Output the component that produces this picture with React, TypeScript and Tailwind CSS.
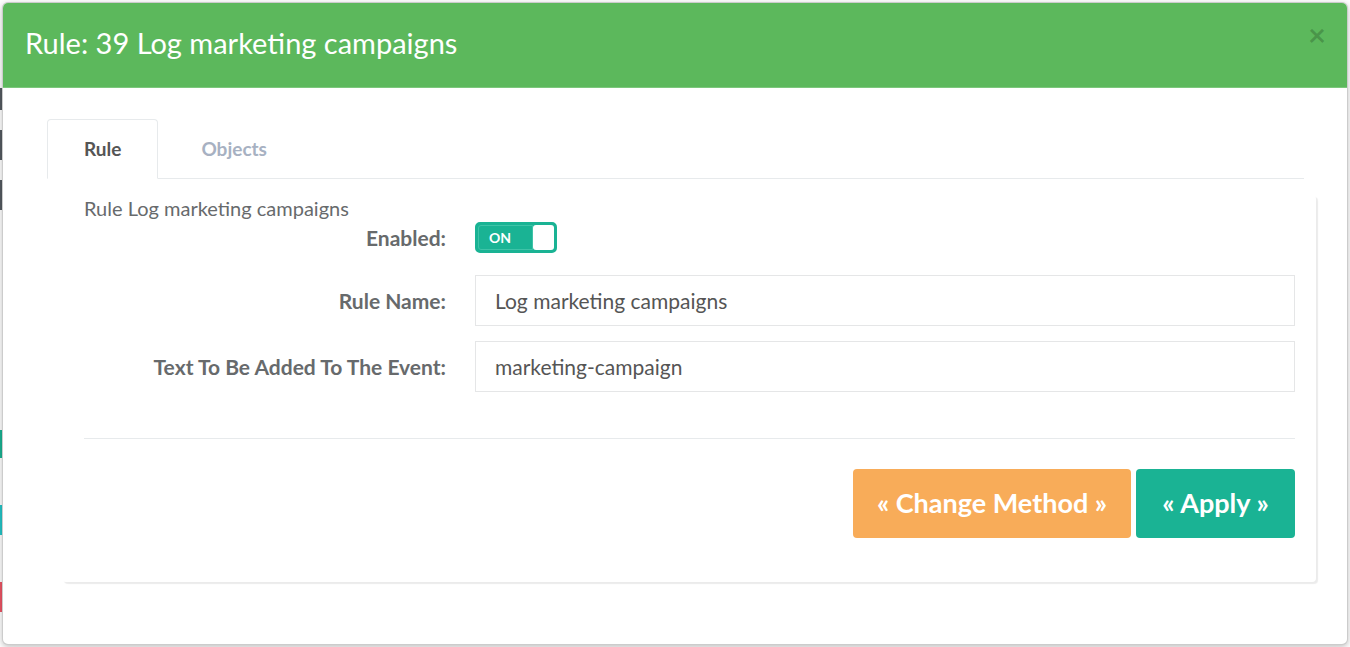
import React from "react";

// strips of the page that peek out from behind the dialog on the left edge
const backdropRows: { h: string; color: string }[] = [
  { h: "h-[88px]", color: "bg-transparent" },
  { h: "h-[22px]", color: "bg-[#555b61]" },
  { h: "h-[20px]", color: "bg-transparent" },
  { h: "h-[30px]", color: "bg-[#555b61]" },
  { h: "h-[20px]", color: "bg-transparent" },
  { h: "h-[30px]", color: "bg-[#555b61]" },
  { h: "h-[220px]", color: "bg-transparent" },
  { h: "h-[28px]", color: "bg-[#1ab394]" },
  { h: "h-[47px]", color: "bg-transparent" },
  { h: "h-[30px]", color: "bg-[#23c6c8]" },
  { h: "h-[47px]", color: "bg-transparent" },
  { h: "h-[30px]", color: "bg-[#ed5565]" },
];

const Backdrop: React.FC = () => (
  <div className="flex h-full flex-col">
    {backdropRows.map((r, i) => (
      <div key={i} className={`${r.h} w-[3px] ${r.color}`} />
    ))}
  </div>
);

const Toggle: React.FC = () => (
  <div className="flex h-[31px] w-[82px] rounded-[5px] border-2 border-[#1ab394] bg-[#1ab394] p-[1px]">
    <div className="flex flex-1 items-center rounded-l-[3px] border border-[#3fc3a8] pl-[10px] text-[14px] font-bold leading-none text-white">
      ON
    </div>
    <div className="w-[21px] rounded-[3px] bg-white" />
  </div>
);

const FormRow: React.FC<{ label: string; children: React.ReactNode; className?: string }> = ({
  label,
  children,
  className = "",
}) => (
  <div className={`flex items-center gap-[29px] ${className}`}>
    <label className="w-[362px] shrink-0 text-right text-[21px] font-bold text-[#676a6c]">{label}</label>
    <div className="flex-1">{children}</div>
  </div>
);

const TextInput: React.FC<{ value: string }> = ({ value }) => (
  <input
    type="text"
    defaultValue={value}
    className="h-[51px] w-full border border-[#e5e6e7] bg-white px-[19px] text-[21px] text-[#555] outline-none"
  />
);

export default function App() {
  return (
    <div className="relative h-[647px] w-full overflow-hidden bg-white font-['Lato',sans-serif]">
      <Backdrop />

      <div className="absolute inset-[2px] flex flex-col overflow-hidden rounded-[6px] border border-black/20 bg-white shadow-[0_2px_6px_rgba(0,0,0,0.25)]">
        <div className="flex h-[85px] shrink-0 items-center justify-between border-b border-[#7cc77c] bg-[#5cb85c] pl-[22px] pr-[21px]">
          <h4 className="-mt-[6px] text-[29px] leading-none text-white">Rule: 39 Log marketing campaigns</h4>
          <button className="-mt-[22px] text-[31px] font-bold leading-none text-black/20">×</button>
        </div>

        <div className="pl-[44px] pr-[43px] pt-[31px]">
          <ul className="flex border-b border-[#e7eaec]">
            <li className="-mb-px flex h-[60px] items-center rounded-t-[4px] border border-[#e7eaec] border-b-white bg-white px-[36px] text-[19px] font-bold text-[#555]">
              Rule
            </li>
            <li className="-mb-px flex h-[60px] items-center pl-[43px] pr-[38px] text-[19px] font-bold text-[#a7b1c2]">
              Objects
            </li>
          </ul>

          <div className="ml-[15px] mr-[-12px] mt-[16px] rounded-[4px] bg-white pb-[44px] pl-[22px] pr-[21px] shadow-[2px_2px_1px_rgba(0,0,0,0.08)]">
            <p className="text-[20px] leading-[26px] text-[#676a6c]">Rule Log marketing campaigns</p>

            <FormRow label="Enabled:" className="mt-[1px] h-[31px]">
              <Toggle />
            </FormRow>

            <FormRow label="Rule Name:" className="mt-[22px]">
              <TextInput value="Log marketing campaigns" />
            </FormRow>

            <FormRow label="Text To Be Added To The Event:" className="mt-[15px]">
              <TextInput value="marketing-campaign" />
            </FormRow>

            <hr className="mt-[46px] border-t border-[#e7eaec]" />

            <div className="mt-[30px] flex justify-end gap-[5px]">
              <button className="h-[69px] w-[278px] rounded-[4px] bg-[#f8ac59] text-[27px] font-bold text-white">
                « Change Method »
              </button>
              <button className="h-[69px] w-[159px] rounded-[4px] bg-[#1ab394] text-[27px] font-bold text-white">
                « Apply »
              </button>
            </div>
          </div>
        </div>
      </div>
    </div>
  );
}
